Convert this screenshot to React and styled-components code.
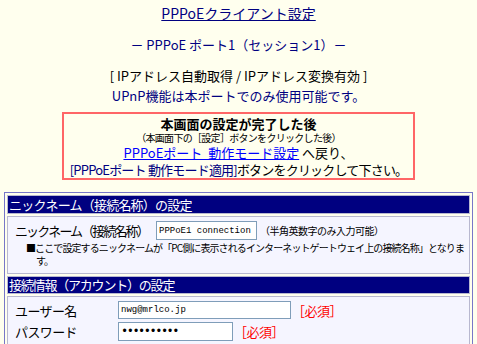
import React from "react";
import styled, { createGlobalStyle } from "styled-components";

const GlobalStyle = createGlobalStyle`
  body {
    margin: 0;
    background: #ffffee;
    font-family: "Noto Sans CJK JP", "Noto Sans", sans-serif;
    color: #000;
  }
`;

const Page = styled.div`
  width: 477px;
  display: flex;
  flex-direction: column;
  align-items: center;
  padding-top: 4px;
`;

const Title = styled.div`
  font-size: 14px;
  line-height: 18px;
  color: #000080;
  text-decoration: underline;
`;

const Line = styled.div`
  font-size: 13px;
  line-height: 18px;
  margin-top: ${(p) => p.$mt || 0}px;
  color: ${(p) => p.$color || "#000"};
  white-space: nowrap;
`;

const NoticeBox = styled.div`
  margin-top: 7px;
  width: 349px;
  border: 2px solid #ff6666;
  padding-top: 2px;
  display: flex;
  flex-direction: column;
  align-items: center;
`;

const NoticeLine = styled.div`
  font-size: ${(p) => p.$size || 13}px;
  line-height: ${(p) => p.$lh || 17}px;
  letter-spacing: ${(p) => p.$ls || 0}px;
  font-weight: ${(p) => (p.$bold ? "bold" : "normal")};
  white-space: nowrap;
`;

const Link = styled.a`
  color: #0000ff;
  text-decoration: underline;
`;

const Navy = styled.span`
  color: #000080;
`;

const Table = styled.div`
  margin-top: 12px;
  align-self: flex-start;
  margin-left: 4px;
  width: 463px;
  border: 1px solid #7777c8;
  padding: 2px;
  display: flex;
  flex-direction: column;
  gap: 2px;
`;

const HeadCell = styled.div`
  background: #000080;
  border: 1px solid #b8b8d0;
  color: #fff;
  font-size: 13px;
  letter-spacing: ${(p) => p.$ls || 0}px;
  line-height: ${(p) => p.$h || 17}px;
  padding-left: 1px;
  white-space: nowrap;
`;

const BodyCell = styled.div`
  background: #f5f5ff;
  border: 1px solid #b8b8d0;
  padding: 4px 6px 6px 7px;
  display: flex;
  flex-direction: column;
`;

const Row = styled.div`
  display: flex;
  align-items: center;
  height: ${(p) => p.$h || 19}px;
  margin-bottom: ${(p) => p.$mb || 0}px;
`;

const Label = styled.div`
  font-size: 13px;
  letter-spacing: ${(p) => p.$ls || 0}px;
  width: ${(p) => p.$w}px;
  flex-shrink: 0;
  white-space: nowrap;
`;

const TextInput = styled.input`
  box-sizing: border-box;
  width: ${(p) => p.$w}px;
  height: ${(p) => p.$h || 19}px;
  border: 1px solid #7f9db9;
  background: #fff;
  font-family: "Liberation Mono", "DejaVu Sans Mono", monospace;
  font-size: ${(p) => (p.$dots ? 12 : 9)}px;
  letter-spacing: ${(p) => (p.$dots ? -1.5 : 0)}px;
  padding: 0 2px;
  color: #000;
  outline: none;
`;

const Hint = styled.span`
  font-size: 10px;
  letter-spacing: -0.5px;
  margin-left: 3px;
  white-space: nowrap;
`;

const Required = styled.span`
  color: #ff0000;
  font-size: 13px;
  letter-spacing: -0.5px;
  margin-left: 1px;
  white-space: nowrap;
`;

const Note = styled.div`
  margin-left: 11px;
  margin-top: 1px;
  font-size: 10px;
  line-height: 13px;
  letter-spacing: -0.9px;
`;

const NoteLine = styled.div`
  white-space: nowrap;
  padding-left: ${(p) => (p.$indent ? 10 : 0)}px;
`;

export default function App() {
  return (
    <>
      <GlobalStyle />
      <Page>
        <Title>PPPoEクライアント設定</Title>
        <Line $mt={14} $color="#000080">
          － PPPoE ポート1（セッション1）－
        </Line>
        <Line $mt={13}>[ IPアドレス自動取得 / IPアドレス変換有効 ]</Line>
        <Line $mt={2} $color="#000080">
          UPnP機能は本ポートでのみ使用可能です。
        </Line>
        <NoticeBox>
          <NoticeLine $bold $lh={15}>
            本画面の設定が完了した後
          </NoticeLine>
          <NoticeLine $size={10} $lh={14} $ls={-0.7}>
            （本画面下の［設定］ボタンをクリックした後）
          </NoticeLine>
          <NoticeLine $lh={16}>
            <Link href="#">PPPoEポート&nbsp;&nbsp;動作モード設定</Link> へ戻り、
          </NoticeLine>
          <NoticeLine $ls={-0.8}>
            <Navy>[PPPoEポート 動作モード適用]</Navy>ボタンをクリックして下さい。
          </NoticeLine>
        </NoticeBox>
        <Table>
          <HeadCell $ls={-0.8}>ニックネーム（接続名称）の設定</HeadCell>
          <BodyCell>
            <Row>
              <Label $w={141} $ls={-1.9}>
                ニックネーム（接続名称）
              </Label>
              <TextInput $w={101} defaultValue="PPPoE1 connection" />
              <Hint>（半角英数字のみ入力可能）</Hint>
            </Row>
            <Note>
              <NoteLine>
                ■ここで設定するニックネームが「PC側に表示されるインターネットゲートウェイ上の接続名称」となりま
              </NoteLine>
              <NoteLine $indent>す。</NoteLine>
            </Note>
          </BodyCell>
          <HeadCell $h={16} $ls={-1.2}>
            接続情報（アカウント）の設定
          </HeadCell>
          <BodyCell>
            <Row $h={18} $mb={3}>
              <Label $w={103} $ls={-0.6}>
                ユーザー名
              </Label>
              <TextInput $w={173} $h={18} defaultValue="nwg@mrlco.jp" />
              <Required>［必須］</Required>
            </Row>
            <Row $h={19}>
              <Label $w={103} $ls={-0.6}>
                パスワード
              </Label>
              <TextInput $w={115} $dots type="password" defaultValue="abcdefghij" />
              <Required>［必須］</Required>
            </Row>
          </BodyCell>
        </Table>
      </Page>
    </>
  );
}
